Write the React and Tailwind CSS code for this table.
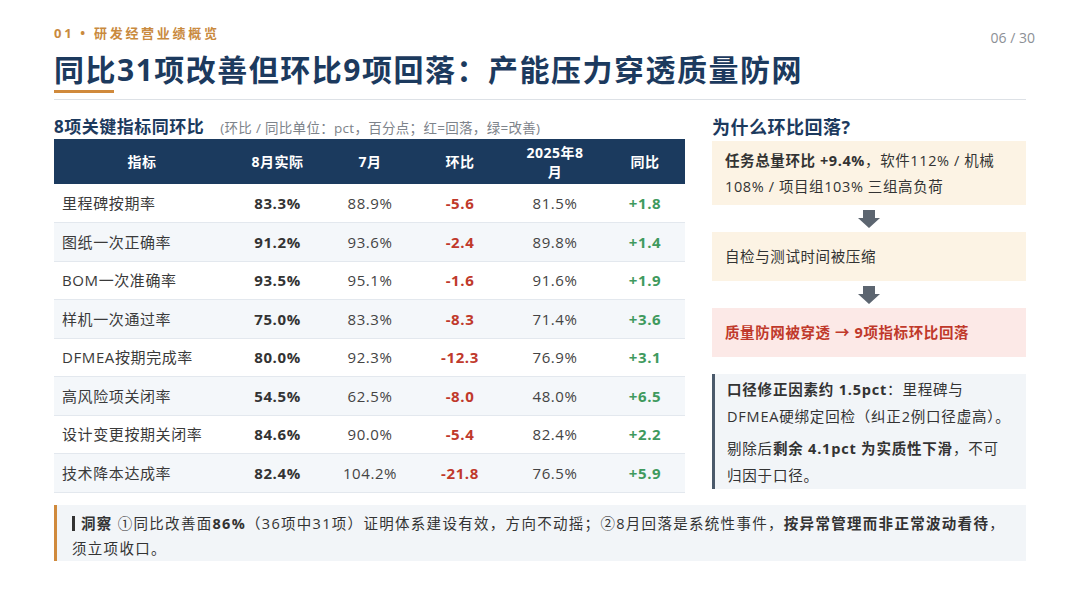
import React from "react";

const rows = [
  ["里程碑按期率", "83.3%", "88.9%", "-5.6", "81.5%", "+1.8"],
  ["图纸一次正确率", "91.2%", "93.6%", "-2.4", "89.8%", "+1.4"],
  ["BOM一次准确率", "93.5%", "95.1%", "-1.6", "91.6%", "+1.9"],
  ["样机一次通过率", "75.0%", "83.3%", "-8.3", "71.4%", "+3.6"],
  ["DFMEA按期完成率", "80.0%", "92.3%", "-12.3", "76.9%", "+3.1"],
  ["高风险项关闭率", "54.5%", "62.5%", "-8.0", "48.0%", "+6.5"],
  ["设计变更按期关闭率", "84.6%", "90.0%", "-5.4", "82.4%", "+2.2"],
  ["技术降本达成率", "82.4%", "104.2%", "-21.8", "76.5%", "+5.9"],
];

function DownArrow() {
  return (
    <svg width="22" height="18" viewBox="0 0 22 18">
      <path d="M5 0 H17 V8 H22 L11 18 L0 8 H5 Z" fill="#5c6570" />
    </svg>
  );
}

export default function App() {
  return (
    <div className="w-[1080px] h-[608px] bg-white px-[54px] pt-[24px] font-['Open_Sans','Noto_Sans_CJK_SC',sans-serif] text-[#333]">
      <div className="flex justify-between items-start h-[18px]">
        <div className="text-[13px] font-bold tracking-[2.7px] text-[#c98a3e] leading-[18px]">
          01 • 研发经营业绩概览
        </div>
        <div className="text-[14px] text-[#8c9096] leading-[20px] mt-[4px] -mr-[9px]">06 / 30</div>
      </div>

      <h1 className="mt-[8px] text-[30px] leading-[40px] font-bold tracking-[1.5px] text-[#1c3a5e]">
        同比31项改善但环比9项回落：产能压力穿透质量防网
      </h1>
      <div className="h-[3px] w-[60px] bg-[#d08a3c]"></div>
      <div className="mt-[6px] h-px bg-[#dde1e6]"></div>

      <div className="mt-[16px] flex gap-[27px]">
        <div className="w-[631px]">
          <div className="flex items-baseline leading-[22px]">
            <span className="text-[17px] font-bold tracking-[0.5px] text-[#1c3a5e]">8项关键指标同环比</span>
            <span className="ml-[16px] text-[13.5px] text-[#7d838a] tracking-[0.3px]">
              (环比 / 同比单位：pct，百分点；红=回落，绿=改善)
            </span>
          </div>
          <table className="w-full table-fixed border-collapse">
            <colgroup>
              <col className="w-[176px]" />
              <col className="w-[95px]" />
              <col className="w-[90px]" />
              <col className="w-[90px]" />
              <col className="w-[100px]" />
              <col className="w-[80px]" />
            </colgroup>
            <thead>
              <tr className="h-[45px] bg-[#1b3a5e] text-white text-[14px] font-bold tracking-[0.5px] leading-[19px]">
                <th className="font-bold text-center">指标</th>
                <th className="font-bold text-center">8月实际</th>
                <th className="font-bold text-center">7月</th>
                <th className="font-bold text-center">环比</th>
                <th className="font-bold text-center">
                  2025年8
                  <br />月
                </th>
                <th className="font-bold text-center">同比</th>
              </tr>
            </thead>
            <tbody>
              {rows.map((r, i) => (
                <tr
                  key={i}
                  className={`h-[38.5px] border-b border-[#e3e8ee] text-[15px] tracking-[0.6px] ${
                    i % 2 === 1 ? "bg-[#f4f7fa]" : "bg-white"
                  }`}
                >
                  <td className="pl-[8px] text-[#3a3a3a]">{r[0]}</td>
                  <td className="text-center font-bold text-[#333]">{r[1]}</td>
                  <td className="text-center text-[#444]">{r[2]}</td>
                  <td className="text-center font-bold text-[#c0392b]">{r[3]}</td>
                  <td className="text-center text-[#444]">{r[4]}</td>
                  <td className="text-center font-bold text-[#3f9a5e]">{r[5]}</td>
                </tr>
              ))}
            </tbody>
          </table>
        </div>

        <div className="w-[314px]">
          <div className="text-[18px] font-bold tracking-[0.5px] leading-[22px] text-[#1c3a5e]">为什么环比回落?</div>
          <div className="mt-[3px] bg-[#fcf3e4] pl-[13px] pt-[7px] pb-[5px] text-[14.5px] leading-[26px] tracking-[0.6px] text-[#333]">
            <span className="font-bold">任务总量环比 +9.4%</span>，软件112% / 机械
            <br />
            108% / 项目组103% 三组高负荷
          </div>
          <div className="h-[27px] flex items-center justify-center">
            <DownArrow />
          </div>
          <div className="h-[49px] flex items-center bg-[#fcf3e4] pl-[13px] text-[14.5px] tracking-[0.6px] text-[#333]">
            自检与测试时间被压缩
          </div>
          <div className="h-[27px] flex items-center justify-center">
            <DownArrow />
          </div>
          <div className="h-[49px] flex items-center bg-[#fce9e7] pl-[13px] text-[14.5px] font-bold tracking-[0.6px] text-[#c0392b]">
            质量防网被穿透 → 9项指标环比回落
          </div>
          <div className="mt-[17px] bg-[#f2f5f8] border-l-[3px] border-[#4b5a6b] pl-[12px] pt-[2px] pb-0 text-[14.5px] leading-[27px] tracking-[0.8px] text-[#333]">
            <p>
              <span className="font-bold">口径修正因素约 1.5pct</span>：里程碑与
              <br />
              DFMEA硬绑定回检（纠正2例口径虚高）。
            </p>
            <p className="mt-[5px]">
              剔除后<span className="font-bold">剩余 4.1pct 为实质性下滑</span>，不可
              <br />
              归因于口径。
            </p>
          </div>
        </div>
      </div>

      <div className="mt-[12px] bg-[#f2f5f8] border-l-[3px] border-[#d08a3c] pl-[15px] pt-[6px] pb-0 text-[14.5px] leading-[25px] tracking-[1.3px] text-[#333]">
        <span className="inline-block w-[3px] h-[15px] bg-[#333] align-[-2px] mr-[6px]"></span>
        <span className="font-bold">洞察</span> ①同比改善面<span className="font-bold">86%</span>（36项中31项）证明体系建设有效，方向不动摇；②8月回落是系统性事件，
        <span className="font-bold">按异常管理而非正常波动看待</span>，
        <br />
        须立项收口。
      </div>
    </div>
  );
}
